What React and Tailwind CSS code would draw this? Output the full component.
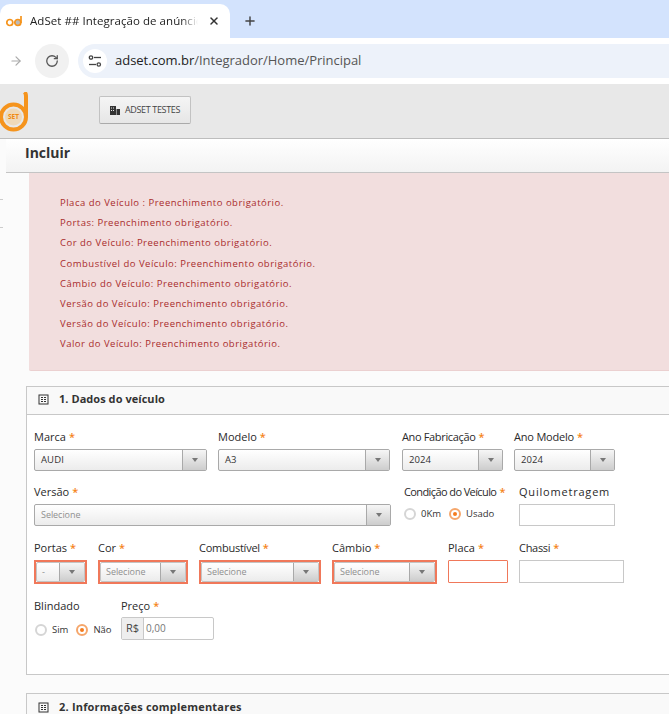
import React from "react";
import { Plus, X, ArrowRight, RotateCw } from "lucide-react";

const font = { fontFamily: '"Open Sans", "Noto Sans", sans-serif' };

function Star() {
  return <span className="text-[#f5841a] ml-[3px] font-semibold">*</span>;
}

function Label({ children, req, className = "" }) {
  return (
    <div className={`h-[16px] leading-[16px] text-[11px] text-[#2a2a2a] whitespace-nowrap ${className}`}>
      {children}
      {req && <Star />}
    </div>
  );
}

function Select({ value, placeholder, arrow = 24, h = "h-[22px]", pad = 6, borderClass = "border-[#a9a9a9]" }) {
  return (
    <div className={`flex ${h} w-full border ${borderClass} rounded-[2px] bg-gradient-to-b from-white to-[#ececec] overflow-hidden`}>
      <div style={{ paddingLeft: pad }} className={`flex-1 min-w-0 flex items-center whitespace-nowrap ${placeholder ? "text-[9px] tracking-[-0.05px] text-[#8f8f8f]" : "text-[9.5px] tracking-[0.1px] text-[#333]"}`}>
        {value}
      </div>
      <div style={{ width: arrow }} className="shrink-0 border-l border-[#a9a9a9] bg-gradient-to-b from-[#f6f6f6] to-[#cdcdcd] flex items-center justify-center">
        <div className="w-0 h-0 border-l-[3px] border-r-[3px] border-t-[4px] border-l-transparent border-r-transparent border-t-[#777]" />
      </div>
    </div>
  );
}

function ErrSelect({ value, placeholder, arrow }) {
  return (
    <div className="border-2 border-[#f0785a] h-[24px]">
      <Select value={value} placeholder={placeholder} arrow={arrow} h="h-[20px]" pad={5} borderClass="border-[#c4c4c4]" />
    </div>
  );
}

function Radio({ on, label }) {
  return (
    <div className="flex items-center">
      <div className={`w-[12px] h-[12px] rounded-full border-2 flex items-center justify-center bg-white ${on ? "border-[#f5a66b]" : "border-[#d5d5d5]"}`}>
        {on && <div className="w-[4px] h-[4px] rounded-full bg-[#f57c1f]" />}
      </div>
      <span className="ml-[5px] text-[9.5px] text-[#333]">{label}</span>
    </div>
  );
}

function PanelHead({ children, last, track }) {
  return (
    <div className={`h-[28px] flex items-center pl-[11px] pb-[2px] bg-[#f9f9f9] ${last ? "" : "border-b border-[#c8c8c8]"}`}>
      <svg width="11" height="11" viewBox="0 0 11 11" className="shrink-0">
        <rect x="1" y="1" width="9" height="9" fill="none" stroke="#333" />
        <path d="M3 3h2v1H3zM6 3h2v1H6zM3 5h2v1H3zM6 5h2v1H6zM3 7h2v1H3zM6 7h2v1H6z" fill="#333" />
      </svg>
      <span className={`ml-[10px] text-[11px] font-bold text-[#333] whitespace-nowrap ${track}`}>{children}</span>
    </div>
  );
}

const errors = [
  "Placa do Veículo : Preenchimento obrigatório.",
  "Portas: Preenchimento obrigatório.",
  "Cor do Veículo: Preenchimento obrigatório.",
  "Combustível do Veículo: Preenchimento obrigatório.",
  "Câmbio do Veículo: Preenchimento obrigatório.",
  "Versão do Veículo: Preenchimento obrigatório.",
  "Versão do Veículo: Preenchimento obrigatório.",
  "Valor do Veículo: Preenchimento obrigatório.",
];

export default function App() {
  return (
    <div style={font} className="w-[669px] h-[714px] overflow-hidden bg-white flex flex-col">
      {/* tab strip */}
      <div className="h-[38px] shrink-0 bg-[#d3e3fd] flex items-end">
        <div className="w-[230px] h-[34px] bg-white rounded-t-[10px] flex items-center pl-[6px]">
          <svg width="17" height="12" viewBox="0 0 17 12" className="shrink-0">
            <circle cx="3.800" cy="7.500" r="3" fill="none" stroke="#f5941d" strokeWidth="1.700" />
            <circle cx="11.800" cy="7.500" r="3" fill="#bbb" stroke="#f5941d" strokeWidth="1.700" />
            <path d="M15 8V1" stroke="#f5941d" strokeWidth="1.700" />
          </svg>
          <span className="ml-[7px] w-[168px] overflow-hidden whitespace-nowrap text-[11.5px] tracking-[0.05px] text-[#222]" style={{ maskImage: "linear-gradient(to right, black 90%, transparent)" }}>
            AdSet ## Integração de anúncios
          </span>
          <X size={12} strokeWidth={3} className="ml-[10px] text-[#333] shrink-0" />
        </div>
        <div className="h-[34px] flex items-center ml-[13px]">
          <Plus size={14} strokeWidth={2.500} className="text-[#444]" />
        </div>
      </div>

      {/* address row */}
      <div className="h-[46px] shrink-0 bg-white flex items-center pl-[9px]">
        <ArrowRight size={14} strokeWidth={2} className="text-[#aaa] shrink-0" />
        <div className="ml-[12px] w-[34px] h-[34px] rounded-full bg-[#f1f1f1] flex items-center justify-center shrink-0">
          <RotateCw size={14} strokeWidth={2.200} className="text-[#555]" />
        </div>
        <div className="ml-[9px] flex-1 h-[34px] rounded-l-[17px] bg-[#edf2fa] flex items-center pl-[5px]">
          <div className="w-[24px] h-[24px] rounded-full bg-white flex items-center justify-center shrink-0">
            <svg width="14" height="12" viewBox="0 0 14 12" fill="none" stroke="#444" strokeWidth="1.300">
              <circle cx="3" cy="2.500" r="1.700" />
              <path d="M6 2.500h7" />
              <path d="M1 9.500h7" />
              <circle cx="10.800" cy="9.500" r="1.700" />
            </svg>
          </div>
          <span className="ml-[8px] text-[13px] tracking-[-0.02px] whitespace-nowrap text-[#555]">
            <span className="text-[#222]">adset.com.br</span>/Integrador/Home/Principal
          </span>
        </div>
      </div>

      {/* site header */}
      <div className="h-[55px] shrink-0 bg-[#e8e8e8] border-b border-[#bdbdbd] flex items-start overflow-hidden">
        <svg width="29" height="42" viewBox="0 0 29 42" className="mt-[8px] shrink-0">
          <circle cx="13.500" cy="25" r="12.500" fill="none" stroke="#f5941d" strokeWidth="4" />
          <circle cx="13.500" cy="25" r="8.500" fill="#efd9b8" />
          <path d="M26 25V4Q26 1.500 24.500 0" fill="none" stroke="#f5941d" strokeWidth="4" />
          <text x="13.500" y="27" textAnchor="middle" fontSize="6.500" fontWeight="700" fill="#f08a10" style={font}>SET</text>
        </svg>
        <div className="ml-[70px] mt-[12px] w-[92px] h-[28px] border border-[#c2c2c2] border-b-[#aaa] rounded-[2px] bg-gradient-to-b from-[#f5f5f5] to-[#e6e6e6] flex items-center justify-center">
          <svg width="10" height="9" viewBox="0 0 10 9" className="shrink-0">
            <path fill="#333" d="M0 0h6v9H0zM6.500 3H10v6H6.500z" />
            <path fill="#e8e8e8" d="M1 1.500h1v1H1zM3 1.500h1v1H3zM1 4h1v1H1zM3 4h1v1H3z" />
          </svg>
          <span className="ml-[5px] text-[9px] tracking-[-0.35px] text-[#444] whitespace-nowrap">ADSET TESTES</span>
        </div>
      </div>

      {/* body */}
      <div className="flex-1 flex bg-[#fbfbfb] min-h-0">
        <div className="w-[6px] shrink-0 pt-[60px]">
          <div className="h-[29px] border-t border-b border-[#ccc] w-[3px]" />
        </div>
        <div className="flex-1 min-w-0">
          <div className="h-[34px] pl-[19px] pb-[7px] flex items-center bg-gradient-to-b from-white to-[#f3f3f3] border-b border-[#c4c4c4] text-[14px] font-bold text-[#333]">
            Incluir
          </div>
          <div className="ml-[23px] w-[700px] h-[198px] bg-[#f2dede] border-b border-[#ebd0d0] rounded-bl-[2px] pt-[20px] pl-[31px] text-[#a92c2c] text-[9.5px] font-medium tracking-[0.5px]">
            {errors.map((e, i) => (
              <div key={i} className="h-[20.200px] leading-[20px] whitespace-nowrap">{e}</div>
            ))}
          </div>

          <div className="ml-[20px] w-[700px] mt-[15px] h-[289px] border border-[#c8c8c8] bg-white">
            <PanelHead track="tracking-[0.05px]">1. Dados do veículo</PanelHead>
            <div className="pl-[7px] pt-[14px]">
              <div className="flex">
                <div className="w-[173px]"><Label req>Marca</Label><div className="mt-[4px]"><Select value="AUDI" /></div></div>
                <div className="w-[172px] ml-[11px]"><Label req>Modelo</Label><div className="mt-[4px]"><Select value="A3" /></div></div>
                <div className="w-[101px] ml-[12px]"><Label req className="tracking-[-0.35px]">Ano Fabricação</Label><div className="mt-[4px]"><Select value="2024" /></div></div>
                <div className="w-[101px] ml-[11px]"><Label req className="tracking-[-0.2px]">Ano Modelo</Label><div className="mt-[4px]"><Select value="2024" /></div></div>
              </div>

              <div className="flex mt-[13px]">
                <div className="w-[357px]"><Label req>Versão</Label><div className="mt-[4px]"><Select value="Selecione" placeholder /></div></div>
                <div className="w-[104px] ml-[13px]">
                  <Label req className="tracking-[-0.6px]">Condição do Veículo</Label>
                  <div className="flex mt-[7px] h-[14px]">
                    <Radio label="0Km" />
                    <div className="ml-[8px]"><Radio on label="Usado" /></div>
                  </div>
                </div>
                <div className="w-[96px] ml-[11px]">
                  <Label className="tracking-[0.8px]">Quilometragem</Label>
                  <div className="mt-[4px] h-[22px] border border-[#c8c8c8] bg-white" />
                </div>
              </div>

              <div className="flex mt-[14px]">
                <div className="w-[53px]"><Label req>Portas</Label><div className="mt-[4px]"><ErrSelect value="-" placeholder arrow={25} /></div></div>
                <div className="w-[90px] ml-[11px]"><Label req>Cor</Label><div className="mt-[4px]"><ErrSelect value="Selecione" placeholder arrow={25} /></div></div>
                <div className="w-[122px] ml-[11px]"><Label req className="tracking-[-0.25px]">Combustível</Label><div className="mt-[4px]"><ErrSelect value="Selecione" placeholder arrow={25} /></div></div>
                <div className="w-[105px] ml-[11px]"><Label req>Câmbio</Label><div className="mt-[4px]"><ErrSelect value="Selecione" placeholder arrow={25} /></div></div>
                <div className="w-[60px] ml-[11px]"><Label req>Placa</Label><div className="mt-[4px] h-[23px] border border-[#f0785a] rounded-[1px] bg-white" /></div>
                <div className="w-[105px] ml-[11px]"><Label req className="tracking-[-0.3px]">Chassi</Label><div className="mt-[4px] h-[23px] border border-[#c8c8c8] bg-white" /></div>
              </div>

              <div className="flex mt-[14px]">
                <div className="w-[87px]">
                  <Label>Blindado</Label>
                  <div className="flex mt-[9px] pl-[1px] h-[14px]">
                    <Radio label="Sim" />
                    <div className="ml-[8px]"><Radio on label="Não" /></div>
                  </div>
                </div>
                <div className="w-[93px]">
                  <Label req>Preço</Label>
                  <div className="mt-[3px] h-[23px] flex border border-[#c8c8c8] rounded-[2px] bg-white overflow-hidden">
                    <div className="w-[22px] bg-[#eeeeee] border-r border-[#c8c8c8] flex items-center justify-center text-[11px] text-[#444]">R$</div>
                    <div className="flex-1 flex items-center pl-[2px] text-[10px] text-[#777]">0,00</div>
                  </div>
                </div>
              </div>
            </div>
          </div>

          <div className="ml-[20px] w-[700px] mt-[18px] h-[40px] border border-[#c8c8c8] bg-[#f9f9f9]">
            <PanelHead last track="tracking-[0.2px]">2. Informações complementares</PanelHead>
          </div>
        </div>
      </div>
    </div>
  );
}
